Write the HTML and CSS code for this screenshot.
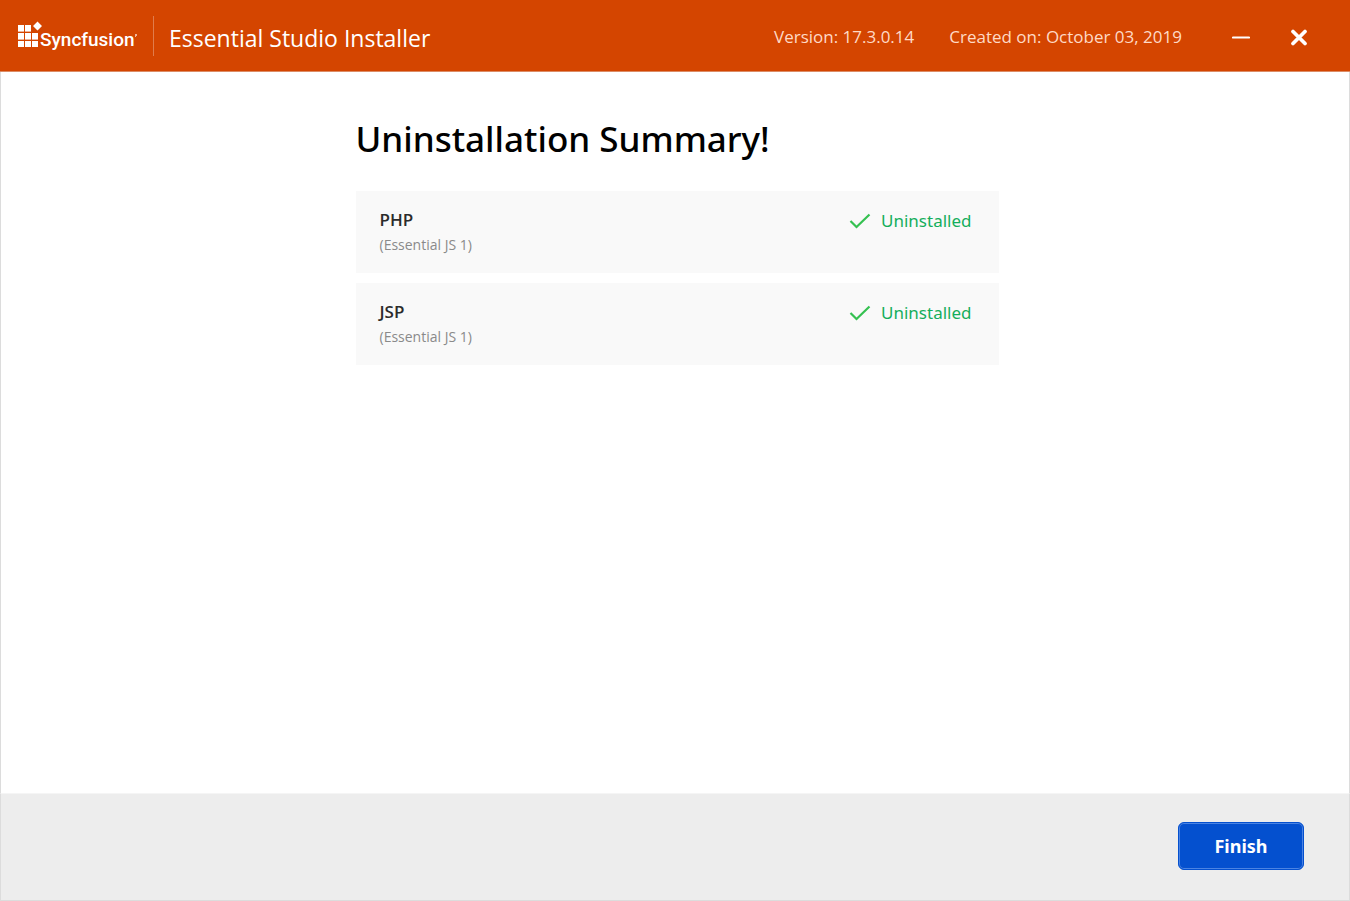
FILE: index.html
```html
<!DOCTYPE html>
<html lang="en">
<head>
<meta charset="utf-8">
<meta name="viewport" content="width=device-width, initial-scale=1">
<title>Essential Studio Installer</title>
<link rel="stylesheet" href="styles.css">
</head>
<body>
<div class="window">
  <header class="titlebar">
    <div class="brand">
      <svg class="brand-mark" width="26" height="30" viewBox="0 0 26 30" aria-hidden="true">
        <path fill="#fff" d="M0 4h6v6H0zM7 4h6v6H7zM0 12h6v6H0zM7 12h6v6H7zM14 12h6v6h-6zM0 20h6v6H0zM7 20h6v6H7zM14 20h6v6h-6zM19.500 .5l4.500 4.500-4.500 4.500-4.500-4.500z"/>
        <path fill="#fff" opacity=".6" d="M0 10h6v1H0zM7 10h6v1H7zM0 18h6v1H0zM7 18h6v1H7zM14 18h6v1h-6z"/>
      </svg>
      <span class="brand-name">Syncfusion</span>
      <svg class="brand-dot" width="2" height="3" viewBox="0 0 2 3" aria-hidden="true"><path fill="#fff" opacity=".6" d="M0 0h2v2H1v1H0z"/></svg>
    </div>
    <h1 class="app-title">Essential Studio Installer</h1>
    <div class="build">
      <span>Version: 17.3.0.14</span>
      <span>Created on: October 03, 2019</span>
    </div>
    <div class="controls">
      <button class="control" type="button" aria-label="Minimize">
        <svg width="18" height="18" viewBox="0 0 18 18"><path d="M1 9.500h16" stroke="#fff" stroke-width="2.200" stroke-linecap="round"/></svg>
      </button>
      <button class="control" type="button" aria-label="Close">
        <svg width="18" height="18" viewBox="0 0 18 18"><path d="M3 3.500l12 12M15 3.500l-12 12" stroke="#fff" stroke-width="3.700" stroke-linecap="round"/></svg>
      </button>
    </div>
  </header>
  <main class="content">
    <div class="summary">
      <h2 class="heading">Uninstallation Summary!</h2>
      <ul class="products">
        <li class="product">
          <div>
            <div class="product-name">PHP</div>
            <div class="product-suite">(Essential JS 1)</div>
          </div>
          <div class="status">
            <svg width="22" height="16" viewBox="0 0 22 16" aria-hidden="true"><path d="M1.500 8l6 6L20.500 1.500" fill="none" stroke="#35c151" stroke-width="2.200"/></svg>
            <span>Uninstalled</span>
          </div>
        </li>
        <li class="product">
          <div>
            <div class="product-name">JSP</div>
            <div class="product-suite">(Essential JS 1)</div>
          </div>
          <div class="status">
            <svg width="22" height="16" viewBox="0 0 22 16" aria-hidden="true"><path d="M1.500 8l6 6L20.500 1.500" fill="none" stroke="#35c151" stroke-width="2.200"/></svg>
            <span>Uninstalled</span>
          </div>
        </li>
      </ul>
    </div>
  </main>
  <footer class="footer">
    <button class="finish" type="button">Finish</button>
  </footer>
</div>
</body>
</html>
```
FILE: styles.css
```css
* { box-sizing: border-box; }
body {
  margin: 0;
  background: #fff;
  font-family: "Segoe UI", "Open Sans", "Noto Sans", sans-serif;
}
.window {
  display: flex;
  flex-direction: column;
  min-height: 100vh;
}
.titlebar {
  display: flex;
  align-items: center;
  height: 72px;
  padding: 0 40px 0 18px;
  background: #d44500;
  border-bottom: 1px solid #dc8c66;
  color: #fff;
}
.brand {
  display: flex;
  align-items: center;
  height: 40px;
  width: 136px;
  border-right: 1px solid #e07c4c;
}
.brand-mark {
  flex: none;
  margin-right: -4px;
}
.brand-name {
  padding-top: 9px;
  font: 500 19px/24px Roboto, sans-serif;
}
.app-title {
  margin: 0 0 0 15px;
  padding-top: 5px;
  font-size: 23px;
  line-height: 32px;
  font-weight: 400;
  white-space: nowrap;
}
.build {
  display: flex;
  gap: 35px;
  margin-left: auto;
  padding-top: 2px;
  color: #ffdac6;
  font-size: 17px;
  line-height: 24px;
  white-space: nowrap;
}
.controls {
  display: flex;
  gap: 36px;
  margin-left: 48px;
  padding-top: 2px;
}
.control {
  display: flex;
  padding: 2px;
  border: 0;
  background: none;
  cursor: pointer;
}
.content {
  flex: 1;
  border: solid #dcdcdc;
  border-width: 0 1px;
  padding: 43px 24px 24px 28px;
}
.summary {
  width: 100%;
  max-width: 643px;
  margin: 0 auto;
}
.heading {
  margin: 0 0 28px;
  color: #000;
  font: 500 35px/48px "Noto Sans", sans-serif;
}
.products {
  display: grid;
  gap: 10px;
  margin: 0;
  padding: 0;
  list-style: none;
}
.product {
  display: flex;
  justify-content: space-between;
  align-items: flex-start;
  padding: 16px 27px 16px 24px;
  background: #f9f9f9;
}
.product-name {
  color: #2b2b2b;
  font-size: 17px;
  line-height: 26px;
  font-weight: 600;
}
.product-suite {
  color: #8a8a8a;
  font-size: 14px;
  line-height: 24px;
}
.status {
  display: flex;
  align-items: center;
  gap: 10px;
  padding-top: 1px;
  color: #14ae5c;
  font: 400 17px/26px "Noto Sans", sans-serif;
}
.footer {
  display: flex;
  justify-content: flex-end;
  padding: 28px 45px 30px;
  background: #ededed;
  border: 1px solid #dcdcdc;
  border-top-color: #f5f5f5;
}
.finish {
  min-width: 126px;
  height: 48px;
  border: 1px solid #0450cf;
  border-radius: 6px;
  background: #0450cf;
  box-shadow: inset 0 0 0 1px #4a83e3;
  color: #fff;
  font: 700 18px/24px "Noto Sans", sans-serif;
  cursor: pointer;
}
```
